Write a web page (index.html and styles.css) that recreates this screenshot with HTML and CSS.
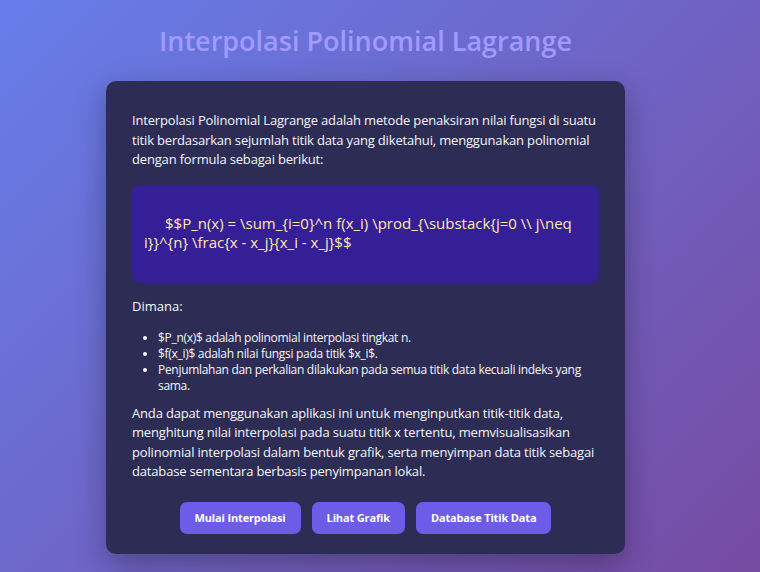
FILE: index.html
```html
<!DOCTYPE html>
<html lang="id">
<head>
<meta charset="utf-8">
<title>Interpolasi Polinomial Lagrange</title>
<link rel="stylesheet" href="styles.css">
</head>
<body>
<div class="page">
  <h1 class="title">Interpolasi Polinomial Lagrange</h1>
  <main class="card">
    <p class="intro">Interpolasi Polinomial Lagrange adalah metode penaksiran nilai fungsi di suatu titik berdasarkan sejumlah titik data yang diketahui, menggunakan polinomial dengan formula sebagai berikut:</p>
    <div class="formula">$$P_n(x) = \sum_{i=0}^n f(x_i) \prod_{\substack{j=0 \\ j\neq i}}^{n} \frac{x - x_j}{x_i - x_j}$$</div>
    <p class="where">Dimana:</p>
    <ul class="notes">
      <li>$P_n(x)$ adalah polinomial interpolasi tingkat n.</li>
      <li>$f(x_i)$ adalah nilai fungsi pada titik $x_i$.</li>
      <li>Penjumlahan dan perkalian dilakukan pada semua titik data kecuali indeks yang sama.</li>
    </ul>
    <p class="outro">Anda dapat menggunakan aplikasi ini untuk menginputkan titik-titik data, menghitung nilai interpolasi pada suatu titik x tertentu, memvisualisasikan polinomial interpolasi dalam bentuk grafik, serta menyimpan data titik sebagai database sementara berbasis penyimpanan lokal.</p>
    <div class="actions">
      <button class="btn">Mulai Interpolasi</button>
      <button class="btn">Lihat Grafik</button>
      <button class="btn">Database Titik Data</button>
    </div>
  </main>
</div>
</body>
</html>
```

FILE: styles.css
```css
* { box-sizing: border-box; }

html, body {
  margin: 0;
  height: 100%;
}

body {
  background: linear-gradient(135deg, #667eea 0%, #764ba2 100%);
  font-family: "Open Sans", "Noto Sans", sans-serif;
  color: #f5f6fa;
  overflow: hidden;
}

.page {
  padding: 24px 29px 0 0;
  display: flex;
  flex-direction: column;
  align-items: center;
}

.title {
  margin: 0 0 23px;
  font-size: 27px;
  line-height: 34px;
  font-weight: 600;
  color: #a29bfe;
}

.card {
  width: 519px;
  background: #2c2c54;
  border-radius: 10px;
  padding: 30px 26px 20px;
  box-shadow: 0 10px 30px rgba(0, 0, 0, 0.3);
}

.intro, .outro {
  margin: 0;
  font-size: 13px;
  line-height: 19.5px;
  letter-spacing: -0.17px;
}

.formula {
  margin: 15px 0 13px;
  background: #341f97;
  border-radius: 8px;
  padding: 29px 12px 30px;
  color: #ffeaa7;
  font-size: 15px;
  line-height: 19.5px;
  text-indent: 21px;
}

.where {
  margin: 0;
  font-size: 13px;
  line-height: 20px;
}

.notes {
  margin: 14px 0 10px;
  padding-left: 26px;
  font-size: 12px;
  line-height: 16px;
  letter-spacing: -0.3px;
}

.actions {
  margin-top: 20px;
  display: flex;
  justify-content: center;
  gap: 11px;
}

.btn {
  border: none;
  background: #6c5ce7;
  color: #fff;
  font-family: inherit;
  font-weight: 700;
  font-size: 11px;
  line-height: 16px;
  letter-spacing: -0.15px;
  padding: 8px 15px;
  border-radius: 7px;
}
```
